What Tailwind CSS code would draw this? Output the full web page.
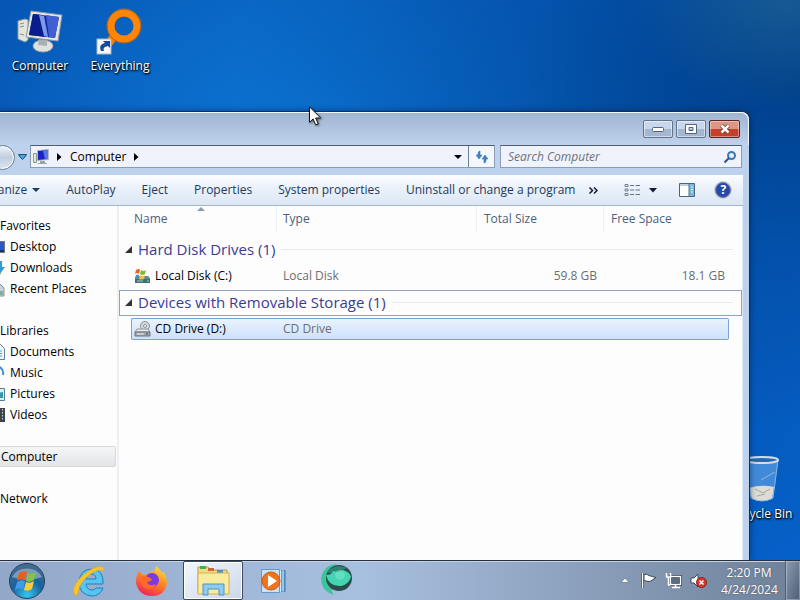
<!DOCTYPE html>
<html lang="en">

<head>
	<meta charset="UTF-8" />
	<meta name="viewport" content="width=device-width, initial-scale=1.0" />
	<title>Computer</title>
	<script src="https://cdn.jsdelivr.net/npm/@tailwindcss/browser@4"></script>
</head>

<body class="h-screen flex flex-col overflow-hidden bg-[#0560c8] font-['Open_Sans','Noto_Sans',sans-serif] text-xs text-black">
	<!-- Desktop -->
	<main class="relative flex-1 min-h-0 overflow-hidden bg-[radial-gradient(ellipse_at_98%_0%,#2a6a8880_0%,transparent_14%),radial-gradient(ellipse_at_100%_15%,#00408c_0%,#00489c80_25%,transparent_50%),radial-gradient(ellipse_at_40%_30%,#0c78d8_0%,#0a68c6_30%,#0656b4_55%,#0560c8_100%)]">
		<!-- Desktop icons -->
		<a href="#" class="absolute left-0 top-2 w-20 flex flex-col items-center text-white [text-shadow:1px_1px_2px_#000,0_1px_2px_#000]">
			<svg class="w-12 h-12" viewBox="0 0 48 48">
				<path d="M2 13l7-2 3 1v20l-3 2-7-3z" fill="#e4e6dc" stroke="#8f9a9c" />
				<path d="M4 16l4-1M4 19l4-1M4 26l4 1" stroke="#8a8f8a" />
				<ellipse cx="27" cy="38" rx="10" ry="6" fill="#dfe2df" stroke="#9aa3a6" />
				<path d="M23 31l8 1v6l-9-1z" fill="#aab0b2" />
				<path d="M15 3l31 4-4 26-32-4z" fill="#e6e6de" stroke="#8c9aa8" />
				<path d="M17 6l26 3-4 21-26-3z" fill="#1529a8" />
				<path d="M17 6l9 1 4 22-17-2z" fill="#0b1c8c" />
				<path d="M30 7l13 2-4 21-6-1z" fill="#3f5fd2" />
				<path d="M23 7l5 1 4 21-4-1z" fill="#7f9ae8" />
			</svg>
			<span class="leading-5">Computer</span>
		</a>
		<a href="#" class="absolute left-20 top-2 w-20 flex flex-col items-center text-white [text-shadow:1px_1px_2px_#000,0_1px_2px_#000]">
			<svg class="w-12 h-12" viewBox="0 0 48 48">
				<path d="M19 27l-7 9" stroke="#f57e05" stroke-width="8" />
				<circle cx="28" cy="18" r="13" fill="none" stroke="#ff8503" stroke-width="7" />
				<circle cx="28" cy="18" r="17" fill="none" stroke="#c8650e" />
				<rect x="1" y="31" width="14" height="15" fill="#f4f6f8" stroke="#a9b5c0" />
				<path d="M5 43c-2-5 0-7 4-8l-2-2h7v7l-2-2c-4 1-5 2-4 5z" fill="#164a98" />
			</svg>
			<span class="leading-5">Everything</span>
		</a>
		<a href="#" class="absolute right-0 top-[456px] w-[78px] flex flex-col items-center text-white [text-shadow:1px_1px_2px_#000,0_1px_2px_#000]">
			<svg class="w-12 h-12" viewBox="0 0 48 48">
				<path d="M9 4h32l-5 38q-11 6-22 0z" fill="#6aa8e8" fill-opacity=".6" />
				<path d="M12 32q12-4 25-1l-2 12q-10 4-20 0z" fill="#dcdcd4" />
				<path d="M18 33l8 4 7-4M20 40l8-2" stroke="#a9a9a2" fill="none" />
				<path d="M9 4l5 38q11 6 22 0l5-38M24 24l14-8" fill="none" stroke="#8cb8e8" />
				<ellipse cx="25" cy="4" rx="16" ry="3" fill="#2a68b0" stroke="#d3dde6" stroke-width="2" />
			</svg>
			<span class="leading-5">Recycle Bin</span>
		</a>

		<!-- Explorer window -->
		<section class="absolute -left-10 right-[50px] top-[111px] bottom-0 flex flex-col rounded-t-lg border border-b-0 border-[#1c2f48] bg-[#bdd2ec] shadow-[0_0_6px_#00204a99] pr-[6px]">
			<header class="h-[33px] -mr-[6px] rounded-t-lg flex justify-end items-end gap-[3px] pb-[7px] pr-[8px] bg-linear-to-b from-[#9fb5d2] to-[#bfd2ec] border-t border-r border-[#f2f8ff]">
				<button type="button" aria-label="Minimize" class="w-[30px] h-[18px] grid place-items-center rounded-xs border border-[#62748c] bg-linear-to-b from-[#c8d8ec] from-50% to-[#a3b7d0] to-50% inset-ring inset-ring-white/50">
					<svg width="12" height="5" viewBox="0 0 12 5"><rect x=".5" y=".5" width="11" height="4" rx="1" fill="#fff" stroke="#53647c" /></svg>
				</button>
				<button type="button" aria-label="Maximize" class="w-[30px] h-[18px] grid place-items-center rounded-xs border border-[#62748c] bg-linear-to-b from-[#c8d8ec] from-50% to-[#a3b7d0] to-50% inset-ring inset-ring-white/50">
					<svg width="12" height="10" viewBox="0 0 12 10"><path d="M.5.5h11v9H.5zM4 3.500v3h4v-3z" fill="#fff" fill-rule="evenodd" stroke="#53647c" /></svg>
				</button>
				<button type="button" aria-label="Close" class="w-[31px] h-[18px] grid place-items-center rounded-xs border border-[#612222] bg-linear-to-b from-[#dd9684] from-50% to-[#c3412a] to-50% inset-ring inset-ring-white/40">
					<svg width="12" height="10" viewBox="0 0 12 10"><path d="M2.500 1.500l7 7M9.500 1.500l-7 7" stroke="#633" stroke-width="4" /><path d="M2.500 1.500l7 7M9.500 1.500l-7 7" stroke="#fff" stroke-width="2.500" /></svg>
				</button>
			</header>

			<!-- Address bar -->
			<div class="h-[30px] shrink-0 flex items-start pr-px">
				<button type="button" aria-label="Forward" class="ml-[29px] w-[25px] h-[25px] rounded-full border border-[#6c7f98] bg-linear-to-b from-[#eef3f9] via-[#c0cfe0] to-[#dbe6f2] inset-ring inset-ring-white"></button>
				<button type="button" aria-label="Recent pages" class="w-[15px] h-[23px] grid place-items-center">
					<svg width="9" height="6" viewBox="0 0 9 6"><path d="M.5.5h8L7 3 4.500 5.500 2 3z" fill="#4fa0d8" stroke="#1d4f80" /></svg>
				</button>
				<nav class="flex-1 h-[23px] flex items-center border border-[#8c9cb4] border-t-[#4c5d74] bg-[#f1f3fc]">
					<svg class="ml-px" width="18" height="16" viewBox="0 0 18 16">
						<path d="M1.500 4.500h3v9h-3z" fill="#e4e8d4" stroke="#8b9a7c" />
						<path d="M8 12h5v2h2v1H6v-1h2z" fill="#98a4a8" />
						<path d="M5.500 1.500l11-1v10l-11 1z" fill="#1a22c8" stroke="#b5bfc8" />
						<path d="M11 1.500l5-.5v9l-3 .5z" fill="#5a74e4" />
					</svg>
					<svg class="ml-[7px]" width="5" height="8" viewBox="0 0 5 8"><path d="M0 0l4.500 4L0 8z" /></svg>
					<a href="#" class="ml-2">Computer</a>
					<svg class="ml-[7px]" width="5" height="8" viewBox="0 0 5 8"><path d="M0 0l4.500 4L0 8z" /></svg>
					<button type="button" aria-label="Previous locations" class="ml-auto w-5 h-full grid place-items-center">
						<svg width="8" height="4" viewBox="0 0 8 4"><path d="M0 0h8L4 4z" /></svg>
					</button>
					<button type="button" aria-label="Refresh" class="w-[26px] h-full grid place-items-center border-l border-[#6d7f96] bg-[#f4f7fd]">
						<svg width="14" height="14" viewBox="0 0 14 14"><path d="M3 4q0-3 2-3v4h2L4 9 1 5h2zM11 10q0 3-2 3V9H7l3-4 3 4h-2z" fill="#3a86c0" stroke="#2f6ea8" stroke-width=".5" /></svg>
					</button>
				</nav>
				<label class="ml-[5px] w-[242px] h-[23px] flex items-center border border-[#8c9cb4] border-t-[#4c5d74] bg-[#f1f3fc] pl-[7px] pr-1">
					<input type="text" aria-label="Search Computer" placeholder="Search Computer" class="flex-1 min-w-0 bg-transparent italic outline-none placeholder:text-[#6b7280]" />
					<svg width="14" height="14" viewBox="0 0 14 14"><circle cx="8.500" cy="5.500" r="3.500" fill="#e4f1fb" stroke="#3c76b4" stroke-width="2" /><path d="M6 8l-4.500 4.500" stroke="#2f4d94" stroke-width="2" /></svg>
				</label>
			</div>

			<!-- Command bar -->
			<div class="h-[31px] shrink-0 flex items-center gap-[26px] pl-4 border-b border-[#a3b4cb] bg-linear-to-b from-[#fcfdff] from-0% via-[#eaf1fa] via-45% to-[#dce7f5] text-[#1e395b] whitespace-nowrap">
				<button type="button" class="flex items-center w-[65px] justify-end gap-[5px]">Organize
					<svg width="8" height="4" viewBox="0 0 8 4"><path d="M0 0h8L4 4z" fill="currentColor" /></svg>
				</button>
				<button type="button">AutoPlay</button>
				<button type="button">Eject</button>
				<button type="button">Properties</button>
				<button type="button">System properties</button>
				<button type="button">Uninstall or change a program</button>
				<button type="button" aria-label="More commands" class="-ml-3">
					<svg width="9" height="7" viewBox="0 0 9 7"><path d="M.5.5l3 3-3 3M5 .5l3 3-3 3" fill="none" stroke="#111c30" stroke-width="1.500" /></svg>
				</button>
				<div class="ml-auto flex items-center pr-[14px]">
					<button type="button" aria-label="Change view">
						<svg width="16" height="14" viewBox="0 0 16 14">
							<path d="M1 1.500h3v2H1zM1 6h3v2H1zM1 10.500h3v2H1z" fill="#dce4ee" stroke="#74849a" />
							<path d="M6 2.500h4M6 7h4M6 11.500h4M11.500 2.500H16M11.500 7H16M11.500 11.500H16" stroke="#66758c" />
						</svg>
					</button>
					<button type="button" aria-label="More view options" class="ml-[9px]">
						<svg width="8" height="5" viewBox="0 0 8 5"><path d="M0 0h8L4 4.500z" fill="#111c30" /></svg>
					</button>
					<button type="button" aria-label="Show the preview pane" class="ml-[22px]">
						<svg width="16" height="14" viewBox="0 0 16 14">
							<path d="M.5.5h15v13H.5z" fill="#fff" stroke="#4b6480" />
							<path d="M1 1h9v2H1z" fill="#bcd0e4" /><path d="M10 1h5v12h-5z" fill="#7db8d4" /><path d="M10 1v12" stroke="#4b7894" /><path d="M12 4h2M12 6.500h2M12 9h2" stroke="#d8f0fa" />
						</svg>
					</button>
					<button type="button" aria-label="Get help" class="ml-5 size-4 rounded-full border border-[#7b8492] bg-[#2747ac] ring-1 ring-[#c4cee0] text-white font-bold leading-[14px]">?</button>
				</div>
			</div>

			<div class="flex-1 min-h-0 flex bg-[#fdfdfe] border-r border-[#dfe9f4]">
				<!-- Navigation pane -->
				<aside class="w-[158px] shrink-0 pt-[9px] pr-px border-r-2 border-[#eceff4] leading-[21px]">
					<a href="#" class="block pl-[39px]">Favorites</a>
					<a href="#" class="flex items-center gap-[5px] pl-[28px]">
						<svg width="16" height="16" viewBox="0 0 16 16"><rect x=".5" y="2.500" width="15" height="11" fill="#2a58c4" stroke="#6d7888" /><path d="M1 11h14v2H1z" fill="#1b3358" /></svg>
						Desktop</a>
					<a href="#" class="flex items-center gap-[5px] pl-[28px]">
						<svg width="16" height="16" viewBox="0 0 16 16"><path d="M0 8h12v7H0z" fill="#f2dc94" /><path d="M9 1h4v6h3l-5 7-5-7h3z" fill="#2f9be4" /></svg>
						Downloads</a>
					<a href="#" class="flex items-center gap-[5px] pl-[28px]">
						<svg width="16" height="16" viewBox="0 0 16 16"><path d="M1 3h10l4 4v8H1z" fill="#c8d2da" stroke="#87939d" /><path d="M10 10h4v4h-4z" fill="#7fae9a" /></svg>
						Recent Places</a>
					<a href="#" class="block mt-[21px] pl-[39px]">Libraries</a>
					<a href="#" class="flex items-center gap-[5px] pl-[28px]">
						<svg width="16" height="16" viewBox="0 0 16 16"><path d="M3.500.5h8l4 4v11h-12z" fill="#eef6fc" stroke="#5f8296" /><path d="M6 7h7M6 9.500h7M6 12h7" stroke="#5a9ccc" /></svg>
						Documents</a>
					<a href="#" class="flex items-center gap-[5px] pl-[28px]">
						<svg width="16" height="16" viewBox="0 0 16 16"><path d="M9 14V1q6 3 5 9" fill="none" stroke="#4590d4" stroke-width="2" /><circle cx="7" cy="13" r="2.500" fill="#2e74c0" /></svg>
						Music</a>
					<a href="#" class="flex items-center gap-[5px] pl-[28px]">
						<svg width="16" height="16" viewBox="0 0 16 16"><path d="M.5 2.500h15v12H.5z" fill="#d8eef4" stroke="#55808c" /><path d="M3 9l5-2 6-1v6H3z" fill="#3a98a8" /></svg>
						Pictures</a>
					<a href="#" class="flex items-center gap-[5px] pl-[28px]">
						<svg width="16" height="16" viewBox="0 0 16 16"><path d="M1 1h15v14H1z" fill="#3c4448" /><path d="M3 2h8v12H3z" fill="#7fb4d8" /><path d="M13.500 2v12" stroke="#d4d8da" stroke-dasharray="1.500" /></svg>
						Videos</a>
					<a href="#" class="block mt-[21px] h-[21px] leading-[19px] pl-[39px] rounded-xs border border-[#d6d8da] bg-linear-to-b from-[#f5f6f6] to-[#e3e4e6]">Computer</a>
					<a href="#" class="block mt-[21px] pl-[39px]">Network</a>
				</aside>

				<!-- File list -->
				<table class="flex-1 self-start table-fixed border-separate border-spacing-0 w-full text-[#6d6d6d]">
					<colgroup>
						<col class="w-[12px]" />
						<col class="w-[146px]" />
						<col class="w-[200px]" />
						<col class="w-[127px]" />
						<col class="w-[125px]" />
						<col />
					</colgroup>
					<thead class="text-left text-[#4c607a]">
						<tr class="h-[26px]">
							<th></th>
							<th scope="col" class="relative font-normal pl-[3px] border-r border-[#eef1f6]">Name
								<svg class="absolute left-[66px] top-px" width="8" height="4" viewBox="0 0 8 4"><path d="M0 4l4-4 4 4z" fill="#8c9cb0" /></svg>
							</th>
							<th scope="col" class="font-normal pl-[6px] border-r border-[#eef1f6]">Type</th>
							<th scope="col" class="font-normal pl-[7px] border-r border-[#eef1f6]">Total Size</th>
							<th scope="col" class="font-normal pl-[7px]">Free Space</th>
							<th></th>
						</tr>
					</thead>
					<tbody>
						<tr class="h-[5px]"><td colspan="6"></td></tr>
						<tr class="h-[26px]">
							<th colspan="6" scope="rowgroup" class="font-normal text-[15px] leading-[22px] text-[#3a3c94] pl-[5px] pr-2 pb-[2px] border border-transparent">
								<div class="flex items-center gap-[6px]">
									<svg width="7" height="7" viewBox="0 0 7 7"><path d="M7 0v7H0z" fill="#333" /></svg>
									Hard Disk Drives (1)
									<span class="flex-1 h-px bg-[#e6e9ef]"></span>
								</div>
							</th>
						</tr>
						<tr class="h-[2px]"><td colspan="6"></td></tr>
						<tr class="h-[22px]">
							<td></td>
							<td class="pl-[3px] text-black">
								<div class="flex items-center gap-1">
									<svg width="17" height="16" viewBox="0 0 17 16">
										<path d="M1 10l2-2h11l2 2v5H1z" fill="#5f8f94" /><path d="M1 11h15v4H1z" fill="#3f7076" /><path d="M3 13h6" stroke="#a9ccd0" /><path d="M13 13h2" stroke="#6f6" />
										<path d="M2 2q3-2 4 0l-1 4q-2-2-4 0z" fill="#e86528" /><path d="M7 2q3 2 5 0l-1 4q-3 2-5 0z" fill="#7cba3a" /><path d="M2 7q2-1 3 0l-1 3H1z" fill="#4a8ad8" /><path d="M6 7q3 2 5 0l-1 4q-3 1-5 0z" fill="#f4c030" />
									</svg>
									Local Disk (C:)
								</div>
							</td>
							<td class="pl-[6px]">Local Disk</td>
							<td class="text-right pr-[7px]">59.8 GB</td>
							<td class="text-right pr-1">18.1 GB</td>
							<td></td>
						</tr>
						<tr class="h-[3px]"><td colspan="6"></td></tr>
					</tbody>
					<tbody>
						<tr class="h-[26px]">
							<th colspan="6" scope="rowgroup" class="font-normal text-[15px] leading-[22px] text-[#3a3c94] pl-[5px] pr-2 pb-[2px] border border-[#8ea3c4]">
								<div class="flex items-center gap-[6px]">
									<svg width="7" height="7" viewBox="0 0 7 7"><path d="M7 0v7H0z" fill="#333" /></svg>
									Devices with Removable Storage (1)
									<span class="flex-1 h-px bg-[#e6e9ef]"></span>
								</div>
							</th>
						</tr>
						<tr class="h-[2px]"><td colspan="6"></td></tr>
						<tr class="h-[22px] *:bg-linear-to-b *:from-[#eaf3fe] *:to-[#cde1fb]">
							<td class="bg-none!"></td>
							<td class="pl-[2px] text-black border border-r-0 border-[#7da2ce] rounded-l-xs">
								<div class="flex items-center gap-1">
									<svg width="17" height="16" viewBox="0 0 17 16">
										<circle cx="11" cy="5" r="4.500" fill="#d4dade" stroke="#8b9298" /><circle cx="11" cy="5" r="1.500" fill="#fff" stroke="#8b9298" />
										<path d="M3 8h11l2 3H1z" fill="#e6e8ea" stroke="#90979c" /><path d="M1 11h15v4H1z" fill="#a2a8ad" stroke="#6c7378" /><path d="M3 13h7" stroke="#f0f2f4" /><path d="M12 13h2" stroke="#444" />
									</svg>
									CD Drive (D:)
								</div>
							</td>
							<td class="pl-[6px] border-y border-[#7da2ce]">CD Drive</td>
							<td class="border-y border-[#7da2ce]"></td>
							<td class="border border-l-0 border-[#7da2ce] rounded-r-xs"></td>
							<td class="bg-none!"></td>
						</tr>
					</tbody>
				</table>
			</div>
		</section>

		<!-- Mouse pointer -->
		<svg class="absolute left-[309px] top-[106px] drop-shadow-[1px_1px_1px_#0008]" width="13" height="20" viewBox="0 0 13 20"><path d="M.5.8v15.500l3.600-3.400 2.500 5.900 2.600-1.100-2.500-5.700h5z" fill="#fff" stroke="#111" /></svg>
	</main>

	<!-- Taskbar -->
	<footer class="h-10 shrink-0 flex items-stretch border-t border-[#26303e] bg-linear-to-r from-[#93a8c8] via-[#a8c0e0] via-45% to-[#6f8199] inset-shadow-[0_1px_0_#c6d3e4]">
		<button type="button" aria-label="Start" class="w-[54px] grid place-items-center">
			<svg width="38" height="38" viewBox="0 0 38 38">
				<defs><radialGradient id="orb" cx=".5" cy=".9" r=".9"><stop offset="0" stop-color="#35c6f4" /><stop offset=".5" stop-color="#17649c" /><stop offset="1" stop-color="#4c6c8c" /></radialGradient></defs>
				<circle cx="19" cy="19" r="17.500" fill="url(#orb)" stroke="#26415c" />
				<path d="M4 15a16 13 0 0 1 30 0q-15 6-30 0z" fill="#fff" opacity=".35" />
				<path d="M11 11q4-3 8-1l-2 8q-4-2-8 1z" fill="#ee5a24" /><path d="M20 11q4 2 8-1l-2 8q-4 3-8 1z" fill="#86c440" /><path d="M9 20q4-3 8-1l-2 8q-4-2-8 1z" fill="#3f9cec" /><path d="M18 20q4 2 8-1l-2 8q-4 3-8 1z" fill="#fccc34" />
			</svg>
		</button>
		<button type="button" aria-label="Internet Explorer" class="ml-1 w-[62px] grid place-items-center">
			<svg width="34" height="34" viewBox="0 0 34 34">
				<path d="M31 20H14q1 6 6 6 3 0 4-2h7q-3 8-11 8-13-1-13-14Q8 5 20 5q12 1 11 15zM14 15h10q0-5-5-5-4 0-5 5z" fill="#58c4f0" fill-rule="evenodd" stroke="#1f80c0" />
				<path d="M4 32Q-3 26 9 13 23 0 31 3q2 2 0 4-2-3-11 2Q7 18 6 29z" fill="#f8c42c" stroke="#e0a018" stroke-width=".5" />
			</svg>
		</button>
		<button type="button" aria-label="Firefox" class="w-[62px] grid place-items-center">
			<svg width="32" height="32" viewBox="0 0 32 32">
				<defs><linearGradient id="fox" x1=".8" y1="0" x2=".3" y2="1"><stop offset="0" stop-color="#ffe04a" /><stop offset=".45" stop-color="#ff8a1e" /><stop offset="1" stop-color="#f0205c" /></linearGradient></defs>
				<path d="M4 6l4 4 6-1 2-3 3 1 2-6q5 4 6 7l2-1q3 6 3 11-2 13-15 13T1 18Q1 11 4 6z" fill="url(#fox)" />
				<circle cx="17" cy="15" r="7" fill="#7a3cdc" /><path d="M5 13q4-4 8-1l4 2q-1 3-5 3 2 5 9 2-4 7-11 4-5-3-5-10z" fill="#ff6a28" />
			</svg>
		</button>
		<button type="button" aria-label="Computer" class="ml-px w-[60px] grid place-items-center rounded-xs border border-[#3b4a60] bg-linear-to-br from-[#f3f7fc] to-[#ccd8e8] inset-ring inset-ring-white">
			<svg width="36" height="32" viewBox="0 0 36 32">
				<path d="M3 2h10l2 3h17v21H3z" fill="#f2dc84" stroke="#b99c44" /><path d="M5 1h6v3H5z" fill="#3cb44c" /><path d="M13 3h6v3h-6z" fill="#d8603c" /><path d="M22 5h6v3h-6z" fill="#4a90d8" />
				<path d="M3 8h31v21H3z" fill="#fbeb9f" stroke="#d0b058" />
				<path d="M8 30V19h21v11h-5v-6H13v6z" fill="#8ecbf0" stroke="#4a93c4" />
			</svg>
		</button>
		<button type="button" aria-label="Windows Media Player" class="w-[60px] grid place-items-center">
			<svg width="30" height="28" viewBox="0 0 30 28">
				<path d="M10 3.500h17v21H10z" fill="#5ea0d4" stroke="#3b78b0" /><path d="M22.500 3v22M25 3v22" stroke="#d6eaf8" />
				<path d="M3.500 2.500h18v23h-18z" fill="#c9e2f5" stroke="#5b9cd0" />
				<circle cx="13" cy="14" r="9" fill="#f0741c" stroke="#d05a10" /><path d="M10 8l9 6-9 6z" fill="#fff" />
			</svg>
		</button>
		<button type="button" aria-label="Globe" class="w-[66px] pb-1 grid place-items-center">
			<svg width="34" height="34" viewBox="0 0 34 34">
				<path d="M14 33Q2 28 2 17 4 3 18 2q-8 6-7 14 1 10 3 17z" fill="#3cc49c" />
				<circle cx="20" cy="16" r="13" fill="#2c4c4c" />
				<path d="M8 10q8-9 21-4-7 1-9 6-6 1-12-2z" fill="#2c8474" /><path d="M7 13q6 0 7-4 6 2 10-1 7 2 8 7-3 8-10 9Q10 25 7 13z" fill="#45d4b0" /><circle cx="21" cy="13" r="5" fill="#80ead0" opacity=".5" />
			</svg>
		</button>

		<!-- Notification area -->
		<div class="ml-auto flex items-center text-white">
			<button type="button" aria-label="Show hidden icons" class="mr-[11px]">
				<svg width="8" height="5" viewBox="0 0 8 5"><path d="M0 4.500L4 0l4 4.500z" fill="#fff" stroke="#44546c" stroke-width=".5" /></svg>
			</button>
			<button type="button" aria-label="Action Center" class="mr-2">
				<svg width="17" height="17" viewBox="0 0 17 17"><path d="M2.500 1v15" stroke="#2d3a4c" stroke-width="3" /><path d="M4 2.500q3-1 5 1 3 1 7 2l-6 4q-3 0-6-1z" fill="#fff" stroke="#3a485c" /><path d="M2.500 1v15" stroke="#fff" stroke-width="1.500" /></svg>
			</button>
			<button type="button" aria-label="Network" class="mr-2">
				<svg width="17" height="17" viewBox="0 0 17 17"><path d="M5.500 4.500h10v8h-10z" fill="#5a6c84" stroke="#2d3a4c" stroke-width="3" /><path d="M5.500 4.500h10v8h-10zM7 15.500h8M10.500 13v2M1.500 1v4h4V1M3.500 5v8h2" fill="none" stroke="#fff" stroke-width="1.500" /></svg>
			</button>
			<button type="button" aria-label="Volume" class="mr-[14px]">
				<svg width="17" height="17" viewBox="0 0 17 17"><path d="M1 6h3l4-4v13l-4-4H1z" fill="#fff" stroke="#3a485c" /><circle cx="11.500" cy="10.500" r="5" fill="#d8342c" stroke="#942018" /><path d="M9.500 8.500l4 4M13.500 8.500l-4 4" stroke="#fff" stroke-width="1.500" /></svg>
			</button>
			<time datetime="2024-04-24T14:20" class="w-[56px] text-center leading-[17px] [text-shadow:0_0_2px_#0006]">2:20 PM<br />4/24/2024</time>
			<button type="button" aria-label="Show desktop" class="ml-2 w-[15px] self-stretch border-l border-[#4c5c72] bg-linear-to-br from-[#8c9cb2] to-[#4d5d74] inset-ring inset-ring-white/30"></button>
		</div>
	</footer>
</body>

</html>
